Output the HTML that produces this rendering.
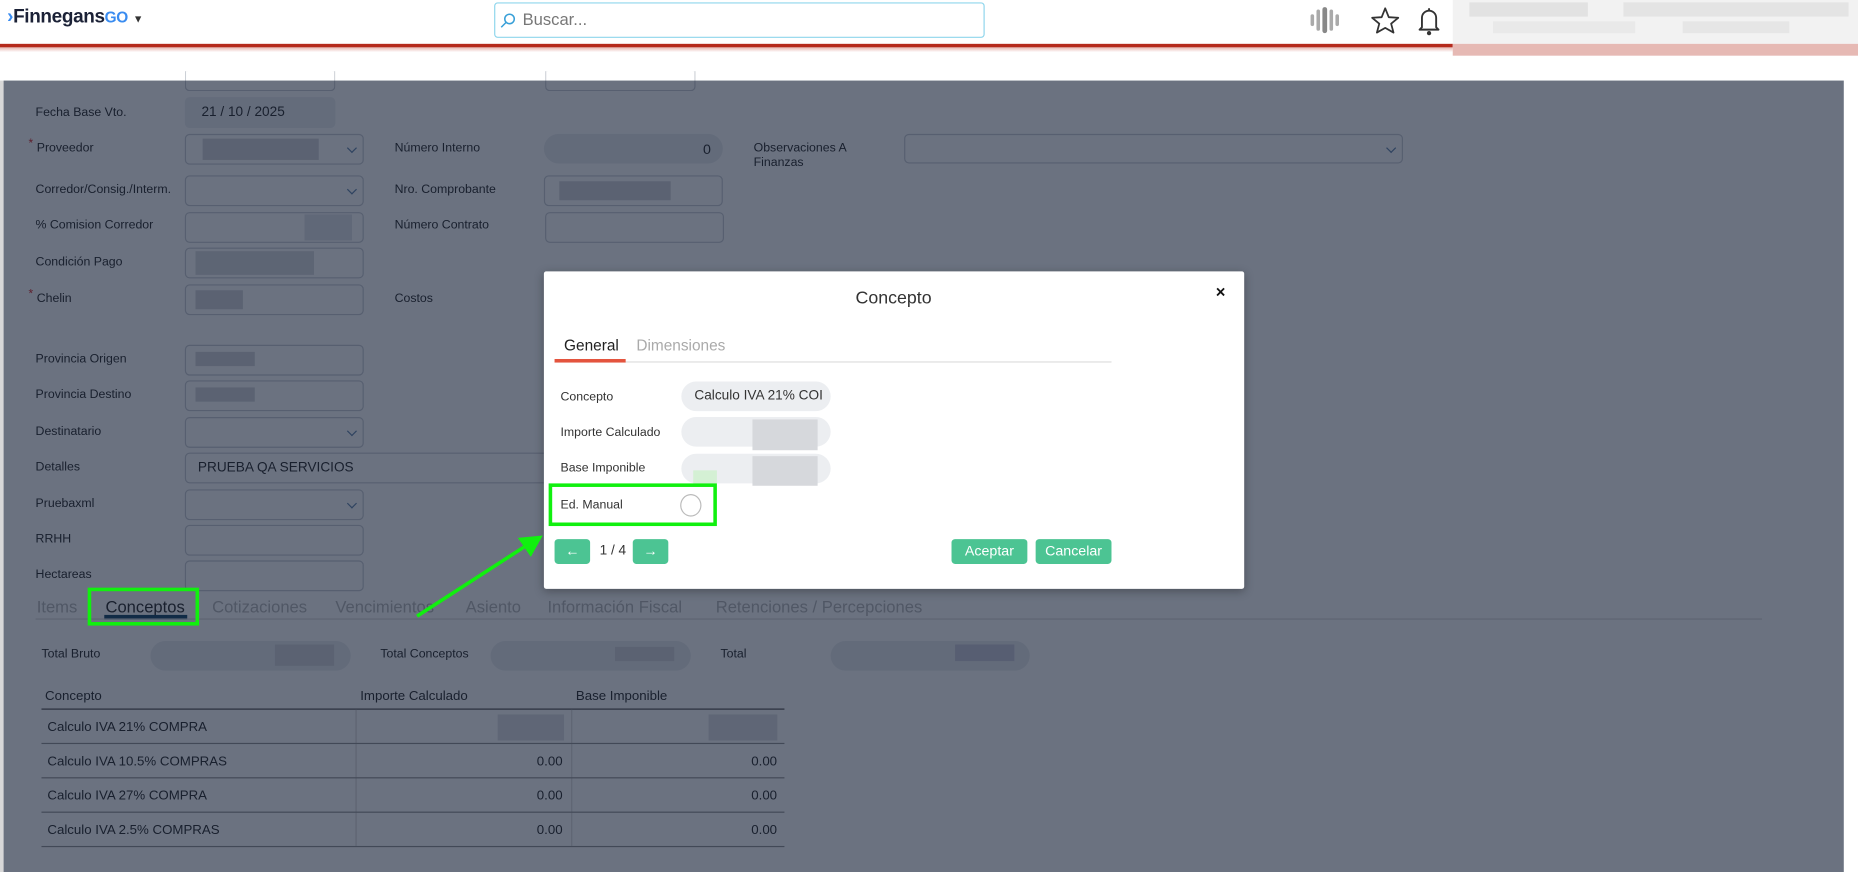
<!DOCTYPE html>
<html><head><meta charset="utf-8"><style>
*{box-sizing:border-box;margin:0;padding:0}
html,body{width:1858px;height:872px;overflow:hidden;background:#fff}
#w{position:absolute;left:0;top:0;width:1568px;height:736px;transform:scale(1.18495,1.1848);transform-origin:0 0;font-family:"Liberation Sans",sans-serif;color:#333}
.a{position:absolute;white-space:nowrap}
.l{position:absolute;font-size:10.4px;color:#333;white-space:nowrap;margin-top:1px}
.in{position:absolute;border:1px solid #ccd0d6;border-radius:4px;background:#fff;height:26px}
.f{background:#eef0f3;border-color:#eef0f3}
.pill{position:absolute;border-radius:13px;background:#eceef1;height:25px}
.chev{position:absolute;right:6px;top:8px;width:6px;height:6px;border-right:1px solid #6a8bb0;border-bottom:1px solid #6a8bb0;transform:rotate(45deg)}
.blur{position:absolute;background:#d6d8dc}
.req{position:absolute;color:#d33;font-size:10px}
.tab{position:absolute;font-size:14px;color:#bbb;top:504px}
.td{position:absolute;font-size:11.2px;color:#333;margin-top:1px}
.hl{position:absolute;height:1px;background:#999;left:35px;width:627px}
.btn{position:absolute;background:#4cc493;border-radius:3px;color:#fff;font-size:12px;text-align:center;line-height:21px;height:21px}
</style></head><body><div id="w">
<!-- header -->
<div class="a" style="left:6px;top:6px;font-size:16px;font-weight:bold;color:#1b2136;letter-spacing:-0.3px"><span style="color:#3a8cf0">›</span>Finnegans<span style="color:#3a8cf0;font-size:13px">GO</span> <span style="font-size:9px;color:#333">▼</span></div>
<div class="a" style="left:417px;top:2px;width:414px;height:30px;border:1px solid #8fd6ec;border-radius:3px"></div>
<svg class="a" style="left:422px;top:10px" width="14" height="14"><circle cx="8" cy="6" r="4" fill="none" stroke="#39a0d8" stroke-width="1.3"/><line x1="5" y1="9" x2="1" y2="13" stroke="#39a0d8" stroke-width="1.3"/></svg>
<div class="a" style="left:441px;top:8px;font-size:14px;color:#777">Buscar...</div>
<svg class="a" style="left:1105px;top:5px" width="28" height="24"><g fill="#aaa"><rect x="1" y="7" width="3" height="10" rx="1.5"/><rect x="6" y="3" width="3" height="18" rx="1.5"/><rect x="11" y="1" width="4" height="22" rx="2" fill="#888"/><rect x="17" y="3" width="3" height="18" rx="1.5"/><rect x="22" y="7" width="3" height="10" rx="1.5"/></g></svg>
<svg class="a" style="left:1156px;top:5px" width="26" height="24"><polygon points="13,2 16,9.5 24,10 18,15 20,22.5 13,18.5 6,22.5 8,15 2,10 10,9.5" fill="none" stroke="#333" stroke-width="1.5" stroke-linejoin="round"/></svg>
<svg class="a" style="left:1196px;top:5px" width="20" height="26"><path d="M4 18 V10 a6 6 0 0 1 12 0 V18 L18 20 H2 Z" fill="none" stroke="#333" stroke-width="1.6" stroke-linejoin="round"/><circle cx="10" cy="23" r="1.8" fill="#333"/><line x1="10" y1="2" x2="10" y2="4" stroke="#333" stroke-width="1.6"/></svg>
<div class="a" style="left:1226px;top:0;width:342px;height:37px;background:#f2f2f2"></div>
<div class="blur" style="left:1240px;top:2px;width:100px;height:12px;background:#e2e2e2"></div>
<div class="blur" style="left:1370px;top:2px;width:190px;height:12px;background:#e4e4e4"></div>
<div class="blur" style="left:1260px;top:18px;width:120px;height:10px;background:#e9e9e9"></div>
<div class="blur" style="left:1420px;top:18px;width:90px;height:10px;background:#e6e6e6"></div>
<div class="a" style="left:0;top:37px;width:1226px;height:3px;background:#b52a1c"></div>
<div class="a" style="left:0;top:40px;width:1226px;height:4px;background:linear-gradient(#e7b8b2,#fff)"></div>
<div class="a" style="left:1226px;top:37px;width:342px;height:10px;background:#e6b9b4"></div>

<!-- page content -->
<div class="in" style="left:156px;top:60px;width:127px;height:17px;border-top:none;border-radius:0 0 4px 4px"></div>
<div class="in" style="left:460px;top:60px;width:127px;height:17px;border-top:none;border-radius:0 0 4px 4px"></div>
<div class="l" style="left:30px;top:89px">Fecha Base Vto.</div>
<div class="in f" style="left:156px;top:82px;width:127px;font-size:11.5px;padding:6px 13px">21 / 10 / 2025</div>
<span class="req" style="left:24px;top:116px">*</span><div class="l" style="left:31px;top:119px">Proveedor</div>
<div class="in" style="left:156px;top:113px;width:151px"><div class="blur" style="left:14px;top:3px;width:98px;height:18px"></div><div class="chev"></div></div>
<div class="l" style="left:333px;top:119px">Número Interno</div>
<div class="pill" style="left:459px;top:113px;width:151px;font-size:12px;text-align:right;padding:6px 10px">0</div>
<div class="l" style="left:636px;top:119px;line-height:12px">Observaciones A<br>Finanzas</div>
<div class="in" style="left:763px;top:113px;width:421px;height:25px"><div class="chev"></div></div>
<div class="l" style="left:30px;top:154px">Corredor/Consig./Interm.</div>
<div class="in" style="left:156px;top:148px;width:151px"><div class="chev"></div></div>
<div class="l" style="left:333px;top:154px">Nro. Comprobante</div>
<div class="in" style="left:459px;top:148px;width:151px"><div class="blur" style="left:12px;top:4px;width:94px;height:16px"></div></div>
<div class="l" style="left:30px;top:184px">% Comision Corredor</div>
<div class="in" style="left:156px;top:179px;width:151px"><div class="blur" style="left:100px;top:1px;width:40px;height:22px;background:#e4e6ea"></div></div>
<div class="l" style="left:333px;top:184px">Número Contrato</div>
<div class="in" style="left:460px;top:179px;width:151px"></div>
<div class="l" style="left:30px;top:215px">Condición Pago</div>
<div class="in" style="left:156px;top:209px;width:151px"><div class="blur" style="left:8px;top:2px;width:100px;height:20px;background:#dcdee2"></div></div>
<span class="req" style="left:24px;top:243px">*</span><div class="l" style="left:31px;top:246px">Chelin</div>
<div class="in" style="left:156px;top:240px;width:151px"><div class="blur" style="left:8px;top:4px;width:40px;height:16px"></div></div>
<div class="l" style="left:333px;top:246px">Costos</div>
<div class="l" style="left:30px;top:297px">Provincia Origen</div>
<div class="in" style="left:156px;top:291px;width:151px"><div class="blur" style="left:8px;top:5px;width:50px;height:12px"></div></div>
<div class="l" style="left:30px;top:327px">Provincia Destino</div>
<div class="in" style="left:156px;top:321px;width:151px"><div class="blur" style="left:8px;top:5px;width:50px;height:12px"></div></div>
<div class="l" style="left:30px;top:358px">Destinatario</div>
<div class="in" style="left:156px;top:352px;width:151px"><div class="chev"></div></div>
<div class="l" style="left:30px;top:388px">Detalles</div>
<div class="in" style="left:156px;top:382px;width:330px;font-size:11.5px;padding:6px 10px">PRUEBA QA SERVICIOS</div>
<div class="l" style="left:30px;top:419px">Pruebaxml</div>
<div class="in" style="left:156px;top:413px;width:151px"><div class="chev"></div></div>
<div class="l" style="left:30px;top:449px">RRHH</div>
<div class="in" style="left:156px;top:443px;width:151px"></div>
<div class="l" style="left:30px;top:479px">Hectareas</div>
<div class="in" style="left:156px;top:473px;width:151px"></div>

<div class="tab" style="left:31px">Items</div>
<div class="tab" style="left:89px;color:#333">Conceptos</div>
<div class="a" style="left:88px;top:519px;width:70px;height:4px;background:#1e4e6e"></div>
<div class="tab" style="left:179px">Cotizaciones</div>
<div class="tab" style="left:283px">Vencimientos</div>
<div class="tab" style="left:393px">Asiento</div>
<div class="tab" style="left:462px">Información Fiscal</div>
<div class="tab" style="left:604px">Retenciones / Percepciones</div>
<div class="a" style="left:30px;top:522px;width:1457px;height:1px;background:#ddd"></div>

<div class="l" style="left:35px;top:546px">Total Bruto</div>
<div class="pill" style="left:127px;top:541px;width:169px"><div class="blur" style="left:105px;top:3px;width:50px;height:18px"></div></div>
<div class="l" style="left:321px;top:546px">Total Conceptos</div>
<div class="pill" style="left:414px;top:541px;width:169px"><div class="blur" style="left:105px;top:5px;width:50px;height:12px"></div></div>
<div class="l" style="left:608px;top:546px">Total</div>
<div class="pill" style="left:701px;top:541px;width:168px"><div class="blur" style="left:105px;top:3px;width:50px;height:14px;background:#ccd"></div></div>

<div class="td" style="left:38px;top:581px">Concepto</div>
<div class="td" style="left:304px;top:581px">Importe Calculado</div>
<div class="td" style="left:486px;top:581px">Base Imponible</div>
<div class="hl" style="top:598px;background:#555"></div>
<div class="a" style="left:300px;top:599px;width:1px;height:115px;background:#ddd"></div>
<div class="a" style="left:482px;top:599px;width:1px;height:115px;background:#ddd"></div>
<div class="td" style="left:40px;top:607px">Calculo IVA 21% COMPRA</div>
<div class="blur" style="left:420px;top:603px;width:56px;height:22px;background:#e0e2e6"></div>
<div class="blur" style="left:598px;top:603px;width:58px;height:22px;background:#e0e2e6"></div>
<div class="hl" style="top:627px"></div>
<div class="td" style="left:40px;top:636px">Calculo IVA 10.5% COMPRAS</div><div class="td" style="left:453px;top:636px">0.00</div><div class="td" style="left:634px;top:636px">0.00</div>
<div class="hl" style="top:656px"></div>
<div class="td" style="left:40px;top:665px">Calculo IVA 27% COMPRA</div><div class="td" style="left:453px;top:665px">0.00</div><div class="td" style="left:634px;top:665px">0.00</div>
<div class="hl" style="top:685px"></div>
<div class="td" style="left:40px;top:694px">Calculo IVA 2.5% COMPRAS</div><div class="td" style="left:453px;top:694px">0.00</div><div class="td" style="left:634px;top:694px">0.00</div>
<div class="hl" style="top:714px"></div>

<!-- overlay -->
<div class="a" style="left:3px;top:68px;width:1553px;height:668px;background:rgba(8,20,43,0.6)"></div>
<div class="a" style="left:0;top:68px;width:3px;height:668px;background:#d8d8d8"></div>

<!-- modal -->
<div class="a" style="left:459px;top:229px;width:591px;height:268px;background:#fff;border-radius:2px;box-shadow:0 2px 8px rgba(0,0,0,.3)"></div>
<div class="a" style="left:722px;top:243px;font-size:15px;color:#333">Concepto</div>
<div class="a" style="left:1026px;top:238px;font-size:14px;color:#111;font-weight:bold">×</div>
<div class="a" style="left:476px;top:284px;font-size:13px;color:#222">General</div>
<div class="a" style="left:537px;top:284px;font-size:13px;color:#aaa">Dimensiones</div>
<div class="a" style="left:468px;top:305px;width:470px;height:1px;background:#ddd"></div>
<div class="a" style="left:468px;top:303px;width:60px;height:3px;background:#e4543e"></div>
<div class="l" style="left:473px;top:329px">Concepto</div>
<div class="pill" style="left:575px;top:322px;width:126px;font-size:11.5px;padding:6px 11px;overflow:hidden;white-space:nowrap">Calculo IVA 21% COI</div>
<div class="l" style="left:473px;top:359px">Importe Calculado</div>
<div class="pill" style="left:575px;top:352px;width:126px"><div class="blur" style="left:60px;top:2px;width:55px;height:26px"></div></div>
<div class="l" style="left:473px;top:389px">Base Imponible</div>
<div class="pill" style="left:575px;top:383px;width:126px"><div class="blur" style="left:60px;top:2px;width:55px;height:25px"></div><div class="blur" style="left:10px;top:14px;width:20px;height:11px;background:#d4f0d4"></div></div>
<div class="l" style="left:473px;top:420px">Ed. Manual</div>
<div class="a" style="left:574px;top:417px;width:18px;height:19px;border:1px solid #bbb;border-radius:50%"></div>
<div class="a" style="left:463px;top:408px;width:142px;height:36px;border:3px solid #11f00f"></div>
<div class="btn" style="left:468px;top:455px;width:30px">←</div>
<div class="a" style="left:506px;top:459px;font-size:11.5px;color:#333">1 / 4</div>
<div class="btn" style="left:534px;top:455px;width:30px">→</div>
<div class="btn" style="left:803px;top:455px;width:64px">Aceptar</div>
<div class="btn" style="left:874px;top:455px;width:64px">Cancelar</div>

<!-- annotations -->
<div class="a" style="left:74px;top:496px;width:94px;height:32px;border:3px solid #11f00f"></div>
<svg class="a" style="left:340px;top:440px" width="130" height="90"><line x1="12" y1="80" x2="108" y2="18" stroke="#11f00f" stroke-width="3"/><polygon points="118,12 97,14 108,30" fill="#11f00f"/></svg>
</div></body></html>
